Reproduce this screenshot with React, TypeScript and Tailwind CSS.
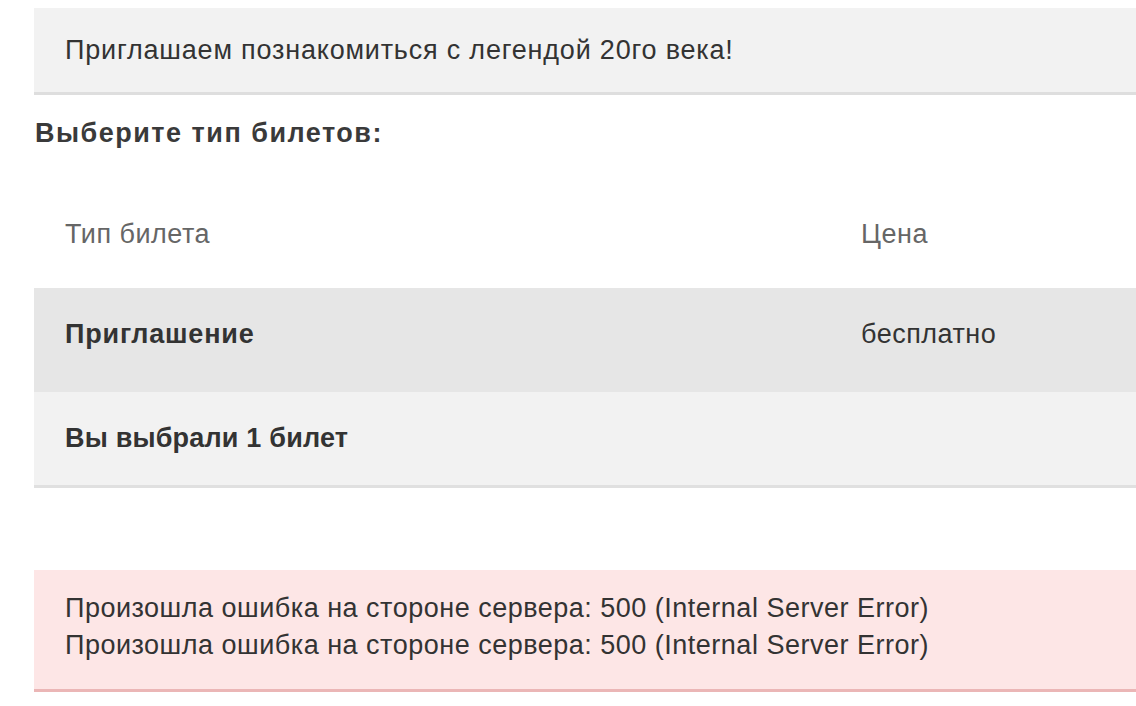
export default function App() {
  return (
    <div
      className="min-h-screen w-[1136px] overflow-hidden bg-white text-[27px] tracking-[0.5px] text-[#333333]"
      style={{ fontFamily: '"Liberation Sans", Arial, sans-serif' }}
    >
      <div className="ml-[34px] w-[1140px]">
        {/* Intro */}
        <div className="mt-[8px] flex h-[87px] items-center border-b-[3px] border-[#dedede] bg-[#f2f2f2] pl-[31px] leading-[32px] tracking-[0.8px]">
          Приглашаем познакомиться с легендой 20го века!
        </div>

        <h2 className="mt-[22px] pl-[1px] text-[27px] font-bold leading-[32px] tracking-[1.5px] text-[#3a3a3a]">
          Выберите тип билетов:
        </h2>

        {/* Tickets table */}
        <div className="mt-[39px] leading-[32px]">
          <div className="flex h-[100px] items-start pt-[30px] pl-[31px] text-[#666666]">
            <div className="w-[796px]">Тип билета</div>
            <div>Цена</div>
          </div>
          <div className="flex h-[104px] items-start bg-[#e6e6e6] pt-[30px] pl-[31px]">
            <div className="w-[796px] font-bold tracking-[0.8px]">Приглашение</div>
            <div>бесплатно</div>
          </div>
          <div className="flex h-[96px] items-start border-b-[3px] border-[#e0e0e0] bg-[#f2f2f2] pt-[30px] pl-[31px]">
            <div className="font-bold tracking-[0.2px]">Вы выбрали 1 билет</div>
          </div>
        </div>

        {/* Error */}
        <div className="mt-[82px] border-b-[3px] border-[#ebb6b6] bg-[#fde6e6] pt-[20px] pb-[25px] pl-[31px] leading-[37px]">
          <div>Произошла ошибка на стороне сервера: 500 (Internal Server Error)</div>
          <div>Произошла ошибка на стороне сервера: 500 (Internal Server Error)</div>
        </div>
      </div>
    </div>
  );
}
